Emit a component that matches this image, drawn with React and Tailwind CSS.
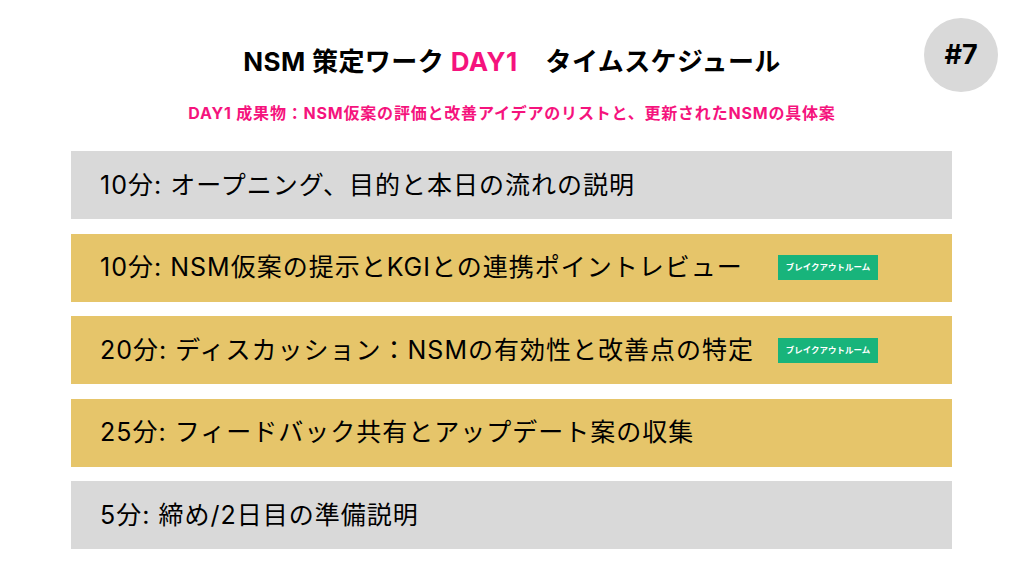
const rows = [
  { text: '10分: オープニング、目的と本日の流れの説明', bg: 'bg-[#d9d9d9]' },
  { text: '10分: NSM仮案の提示とKGIとの連携ポイントレビュー', bg: 'bg-[#e6c56a]', badge: true },
  { text: '20分: ディスカッション：NSMの有効性と改善点の特定', bg: 'bg-[#e6c56a]', badge: true },
  { text: '25分: フィードバック共有とアップデート案の収集', bg: 'bg-[#e6c56a]' },
  { text: '5分: 締め/2日目の準備説明', bg: 'bg-[#d9d9d9]' },
];

const App = () => {
  return (
    <div
      className="relative w-[1024px] h-[576px] bg-white overflow-hidden text-black"
      style={{ fontFamily: 'Inter, "Noto Sans CJK JP", sans-serif' }}
    >
      <div className="absolute left-[924px] top-[18px] w-[74px] h-[74px] rounded-full bg-[#d9d9d9] flex items-center justify-center text-[27px] font-bold">
        #7
      </div>
      <div className="flex flex-col items-center pt-[44px]">
        <h1 className="text-[26px] font-bold leading-[36px] tracking-[0.4px]">
          NSM 策定ワーク <span className="text-[#f5137d]">DAY1</span>
          <span className="inline-block w-[28px]" />
          タイムスケジュール
        </h1>
        <p className="mt-[23px] text-[16px] font-bold text-[#f5137d] leading-[20px] tracking-[0.8px]">
          DAY1 成果物：NSM仮案の評価と改善アイデアのリストと、更新されたNSMの具体案
        </p>
      </div>
      <div className="flex flex-col gap-[14.5px] mx-[71px] mt-[28px] w-[881px]">
        {rows.map((r) => (
          <div key={r.text} className={`${r.bg} h-[68px] flex items-center pl-[29px]`}>
            <span className="text-[25px] leading-none tracking-[1px]">{r.text}</span>
            {r.badge && (
              <span className="ml-auto mr-[74px] h-[25px] w-[100px] flex items-center justify-center bg-[#18b47b] text-white text-[8.5px] font-bold">
                ブレイクアウトルーム
              </span>
            )}
          </div>
        ))}
      </div>
    </div>
  );
};

export default App;
